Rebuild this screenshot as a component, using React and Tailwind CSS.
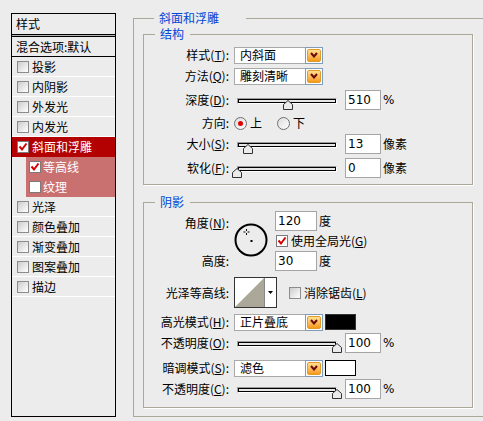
import React from 'react';

const styles = [
  { name: '投影' },
  { name: '内阴影' },
  { name: '外发光' },
  { name: '内发光' },
  { name: '斜面和浮雕', checked: true, active: true },
  { name: '等高线', checked: true, sub: true },
  { name: '纹理', sub: true },
  { name: '光泽' },
  { name: '颜色叠加' },
  { name: '渐变叠加' },
  { name: '图案叠加' },
  { name: '描边' },
];

const Check = ({ checked, white }) => (
  <div
    className={
      checked || white
        ? 'w-[12px] h-[12px] shrink-0 border border-[#7b7b7b] bg-white flex items-center justify-center'
        : 'w-[12px] h-[12px] shrink-0 border border-[#8c8c8c] bg-linear-to-br from-[#cdcdcd] to-white'
    }
  >
    {checked && (
      <svg width="10" height="10" viewBox="0 0 10 10">
        <path d="M1.5 4.5 L4 7.5 L8.5 1.5" fill="none" stroke="#d40000" strokeWidth="2" />
      </svg>
    )}
  </div>
);

const Radio = ({ checked }) => (
  <div className="w-[13px] h-[13px] shrink-0 rounded-full border border-[#6f6f6f] bg-linear-to-br from-[#dcdcdc] to-white flex items-center justify-center">
    {checked && <div className="w-[5px] h-[5px] rounded-full bg-[#e00000]" />}
  </div>
);

const Label = ({ children }) => (
  <div className="w-[90px] shrink-0 text-right pr-[5px] whitespace-nowrap">{children}</div>
);

const Num = ({ value, wide }) => (
  <div
    className={
      (wide ? 'w-[42px] ' : 'w-[36px] ') +
      'h-[20px] shrink-0 border border-[#a5a5a5] bg-white flex items-center pl-[2px] text-[12px] [font-family:"DejaVu_Sans",sans-serif]'
    }
  >
    {value}
  </div>
);

const Select = ({ value }) => (
  <div className="flex h-[17px] shrink-0">
    <div className="w-[71px] h-full border border-r-0 border-[#a9a9a9] bg-white pl-[5px] flex items-center">{value}</div>
    <div className="w-[18px] h-full border border-[#7f9db9] bg-white p-[1px]">
      <div className="w-full h-full rounded-[2px] bg-linear-to-b from-[#ffe08e] to-[#f59a0c] border border-[#e39a2a] flex items-center justify-center">
        <svg width="8" height="6" viewBox="0 0 8 6">
          <path d="M1 1 L4 4.5 L7 1" fill="none" stroke="#6b0a0a" strokeWidth="2" />
        </svg>
      </div>
    </div>
  </div>
);

const Slider = ({ pct }) => (
  <div className="relative ml-[3px] w-[100px] h-[20px] shrink-0 pt-[8px]">
    <div className="h-[6px] border border-t-[#9d9d9d] border-l-[#9d9d9d] border-b-white border-r-white">
      <div className="h-full border border-black bg-[#e6e6e6]" />
    </div>
    <svg
      className="absolute top-[10px]"
      style={{ left: `calc(${pct}% - 5px)` }}
      width="10"
      height="10"
      viewBox="0 0 10 10"
    >
      <path d="M0.5 9.5 V4.5 L5 0.5 L9.5 4.5 V9.5 Z" fill="#ebebeb" stroke="#333" />
    </svg>
  </div>
);

const Row = ({ className, children }) => (
  <div className={'flex items-center h-[20px] ' + className}>{children}</div>
);

export default function App() {
  return (
    <div className="w-[483px] h-[421px] bg-[#ececec] flex items-start overflow-hidden text-[12px] leading-[14px] text-black [font-family:'Noto_Sans_CJK_SC',sans-serif]">
      {/* style list */}
      <div className="ml-[11px] mt-[13px] w-[105px] h-[404px] shrink-0 border border-black flex flex-col">
        <div className="h-[20px] flex items-center pl-[4px]">样式</div>
        <div className="h-[3px] border-y border-black bg-[#b5b5b5]" />
        <div className="h-[20px] flex items-center pl-[4px] border-b border-black">混合选项:默认</div>
        {styles.map((s) =>
          s.sub ? (
            <div key={s.name} className="h-[20px] flex">
              <div className="w-[14px]" />
              <div className="flex-1 flex items-center bg-[#c97171] text-white pl-[3px]">
                <Check checked={s.checked} white />
                <span className="ml-[2px]">{s.name}</span>
              </div>
            </div>
          ) : s.active ? (
            <div key={s.name} className="h-[20px] flex items-center pl-[5px] bg-[#b30000] text-white">
              <Check checked />
              <span className="ml-[3px]">{s.name}</span>
            </div>
          ) : (
            <div key={s.name} className="h-[20px] flex items-center pl-[5px] border-b border-white">
              <Check />
              <span className="ml-[3px]">{s.name}</span>
            </div>
          )
        )}
      </div>

      {/* bevel & emboss */}
      <fieldset className="ml-[17px] mt-[11px] w-[360px] h-[406px] shrink-0 border border-[#aca899] pl-[9px]">
        <legend className="ml-[11px] pl-[5px] pr-[27px] text-[#0046d5]">斜面和浮雕</legend>

        <fieldset className="mt-[2px] w-[330px] h-[158px] border border-[#aca899] shadow-[1px_1px_0_#fff]">
          <legend className="ml-[11px] pl-[5px] pr-[6px] text-[#0046d5]">结构</legend>
          <Row className="mt-[4px]">
            <Label>样式(<u>T</u>):</Label>
            <Select value="内斜面" />
          </Row>
          <Row className="mt-[1px]">
            <Label>方法(<u>Q</u>):</Label>
            <Select value="雕刻清晰" />
          </Row>
          <Row className="mt-[4px]">
            <Label>深度(<u>D</u>):</Label>
            <Slider pct={51} />
            <div className="ml-[8px]"><Num value="510" /></div>
            <span className="ml-[2px] [font-family:'DejaVu_Sans',sans-serif]">%</span>
          </Row>
          <Row className="mt-[3px]">
            <Label>方向:</Label>
            <Radio checked />
            <span className="ml-[3px]">上</span>
            <div className="ml-[15px]"><Radio /></div>
            <span className="ml-[3px]">下</span>
          </Row>
          <Row className="mt-[1px]">
            <Label>大小(<u>S</u>):</Label>
            <Slider pct={11} />
            <div className="ml-[8px]"><Num value="13" /></div>
            <span className="ml-[2px]">像素</span>
          </Row>
          <Row className="mt-[4px]">
            <Label>软化(<u>F</u>):</Label>
            <Slider pct={0} />
            <div className="ml-[8px]"><Num value="0" /></div>
            <span className="ml-[2px]">像素</span>
          </Row>
        </fieldset>

        <fieldset className="mt-[10px] w-[330px] h-[213px] border border-[#aca899] shadow-[1px_1px_0_#fff]">
          <legend className="ml-[11px] pl-[5px] pr-[6px] text-[#0046d5]">阴影</legend>

          <div className="mt-[2px] flex items-start">
            <div className="w-[90px] shrink-0 flex flex-col">
              <div className="mt-[2px] h-[20px] flex items-center justify-end pr-[5px]">角度(<u>N</u>):</div>
              <div className="mt-[18px] h-[20px] flex items-center justify-end pr-[5px]">高度:</div>
            </div>
            <svg className="mt-[12px] shrink-0" width="34" height="34" viewBox="0 0 34 34">
              <circle cx="17" cy="17" r="15.5" fill="none" stroke="#000" strokeWidth="2" />
              <rect x="16.5" y="17" width="2" height="2" fill="#000" />
              <path d="M9.5 9 H11.5 M13.5 9 H15.5 M12.5 6 V8 M12.5 10 V12" stroke="#000" strokeWidth="1" />
            </svg>
            <div className="ml-[7px] flex flex-col">
              <div className="h-[20px] flex items-center">
                <Num value="120" wide />
                <span className="ml-[2px]">度</span>
              </div>
              <div className="h-[20px] flex items-center pl-[1px]">
                <Check checked />
                <span className="ml-[3px]">使用全局光(<u>G</u>)</span>
              </div>
              <div className="h-[20px] flex items-center">
                <Num value="30" wide />
                <span className="ml-[2px]">度</span>
              </div>
            </div>
          </div>

          <div className="mt-[6px] flex items-center h-[31px]">
            <Label>光泽等高线:</Label>
            <div className="w-[43px] h-[31px] shrink-0 border border-[#333] flex bg-white">
              <svg width="29" height="29" viewBox="0 0 29 29">
                <rect width="29" height="29" fill="#fff" />
                <polygon points="0,29 29,0 29,29" fill="#aba899" />
              </svg>
              <div className="flex-1 border-l border-[#888] flex items-center justify-center">
                <svg width="5" height="3" viewBox="0 0 5 3">
                  <polygon points="0,0 5,0 2.5,3" fill="#000" />
                </svg>
              </div>
            </div>
            <div className="ml-[12px]"><Check /></div>
            <span className="ml-[3px]">消除锯齿(<u>L</u>)</span>
          </div>

          <Row className="mt-[4px]">
            <Label>高光模式(<u>H</u>):</Label>
            <Select value="正片叠底" />
            <div className="ml-[2px] w-[31px] h-[16px] bg-black border border-[#333]" />
          </Row>
          <Row className="mt-[1px]">
            <Label>不透明度(<u>O</u>):</Label>
            <Slider pct={100} />
            <div className="ml-[8px]"><Num value="100" /></div>
            <span className="ml-[2px] [font-family:'DejaVu_Sans',sans-serif]">%</span>
          </Row>
          <Row className="mt-[5px]">
            <Label>暗调模式(<u>S</u>):</Label>
            <Select value="滤色" />
            <div className="ml-[2px] w-[31px] h-[16px] bg-white border border-black" />
          </Row>
          <Row className="mt-[1px]">
            <Label>不透明度(<u>C</u>):</Label>
            <Slider pct={100} />
            <div className="ml-[8px]"><Num value="100" /></div>
            <span className="ml-[2px] [font-family:'DejaVu_Sans',sans-serif]">%</span>
          </Row>
        </fieldset>
      </fieldset>
    </div>
  );
}
